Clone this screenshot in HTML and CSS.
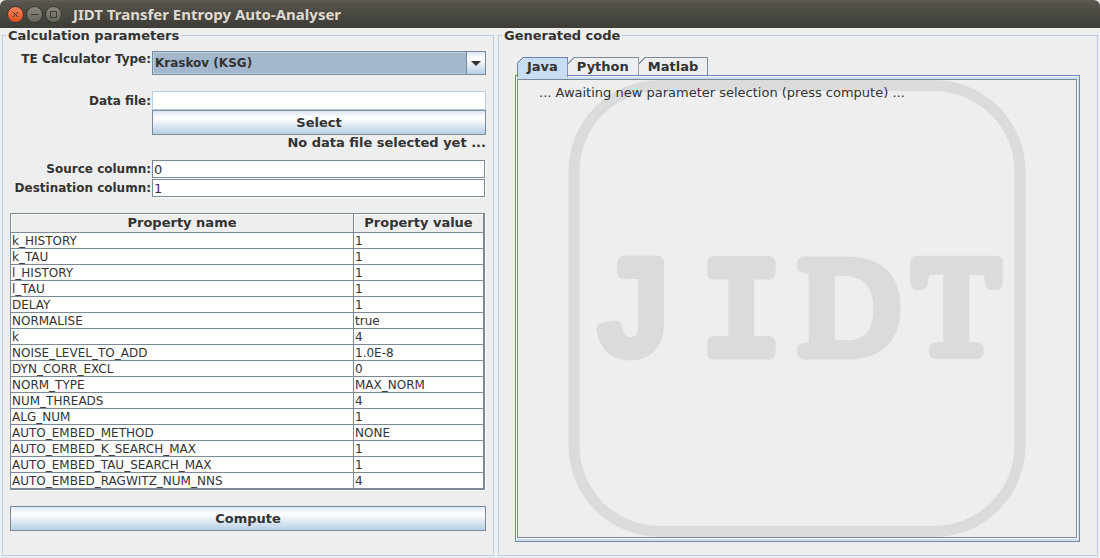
FILE: index.html
```html
<!DOCTYPE html>
<html lang="en">
<head>
<meta charset="utf-8">
<title>JIDT Transfer Entropy Auto-Analyser</title>
<link rel="stylesheet" href="styles.css">
</head>
<body>
<header class="titlebar">
  <button class="winbtn close" type="button" aria-label="Close"><svg viewBox="0 0 17 17"><path d="M6 6l5 5M11 6l-5 5"/></svg></button>
  <button class="winbtn" type="button" aria-label="Minimise"><svg viewBox="0 0 17 17"><path d="M5 8.500h7"/></svg></button>
  <button class="winbtn" type="button" aria-label="Maximise"><svg viewBox="0 0 17 17"><path d="M5.500 5.500h6v6h-6z"/></svg></button>
  <h1 class="title">JIDT Transfer Entropy Auto-Analyser</h1>
</header>
<main class="panes">
  <fieldset class="pane">
    <legend>Calculation parameters</legend>
    <div class="params">
      <div class="form">
        <label for="calc">TE Calculator Type:</label>
        <div class="combo">
          <select id="calc"><option>Kraskov (KSG)</option></select>
          <span class="arrow"><svg viewBox="0 0 10 5"><path d="M0 0h10l-5 5z"/></svg></span>
        </div>
        <label class="file-label" for="file">Data file:</label>
        <div class="file">
          <input class="readonly" id="file" type="text" readonly>
          <button class="push" type="button">Select</button>
          <p class="status">No data file selected yet ...</p>
        </div>
        <label class="field-label" for="source">Source column:</label>
        <div class="field"><input id="source" type="text" value="0"></div>
        <label class="field-label" for="dest">Destination column:</label>
        <div class="field"><input id="dest" type="text" value="1"></div>
      </div>
      <table class="props">
        <thead><tr><th scope="col">Property name</th><th class="value" scope="col">Property value</th></tr></thead>
        <tbody>
          <tr><td>k_HISTORY</td><td>1</td></tr>
          <tr><td>k_TAU</td><td>1</td></tr>
          <tr><td>l_HISTORY</td><td>1</td></tr>
          <tr><td>l_TAU</td><td>1</td></tr>
          <tr><td>DELAY</td><td>1</td></tr>
          <tr><td>NORMALISE</td><td>true</td></tr>
          <tr><td>k</td><td>4</td></tr>
          <tr><td>NOISE_LEVEL_TO_ADD</td><td>1.0E-8</td></tr>
          <tr><td>DYN_CORR_EXCL</td><td>0</td></tr>
          <tr><td>NORM_TYPE</td><td>MAX_NORM</td></tr>
          <tr><td>NUM_THREADS</td><td>4</td></tr>
          <tr><td>ALG_NUM</td><td>1</td></tr>
          <tr><td>AUTO_EMBED_METHOD</td><td>NONE</td></tr>
          <tr><td>AUTO_EMBED_K_SEARCH_MAX</td><td>1</td></tr>
          <tr><td>AUTO_EMBED_TAU_SEARCH_MAX</td><td>1</td></tr>
          <tr><td>AUTO_EMBED_RAGWITZ_NUM_NNS</td><td>4</td></tr>
        </tbody>
      </table>
      <button class="push" type="button">Compute</button>
    </div>
  </fieldset>
  <fieldset class="pane">
    <legend>Generated code</legend>
    <div class="code">
      <div class="tabs" role="tablist">
        <button class="tab active" type="button" role="tab" aria-selected="true">Java</button>
        <button class="tab" type="button" role="tab" aria-selected="false">Python</button>
        <button class="tab" type="button" role="tab" aria-selected="false">Matlab</button>
      </div>
      <div class="sheet" role="tabpanel">
        <div class="view">
          <svg class="watermark" viewBox="0 0 457 457" aria-hidden="true">
            <rect x="5.500" y="5.500" width="446" height="446" rx="86"/>
            <g class="mark">
              <text class="mono" x="64" y="273">J</text>
              <text class="mono" x="173" y="273">I</text>
              <text x="281" y="273">D</text>
              <text x="388" y="273">T</text>
            </g>
          </svg>
          <textarea aria-label="Java code" readonly>... Awaiting new parameter selection (press compute) ...</textarea>
        </div>
      </div>
    </div>
  </fieldset>
</main>
</body>
</html>
```
FILE: styles.css
```css
* { box-sizing: border-box; }

body {
  margin: 0;
  min-height: 100vh;
  display: flex;
  flex-direction: column;
  background: #eee;
  color: #333;
  font: 13px/16px "DejaVu Sans", sans-serif;
}

button, input, select, textarea {
  font: inherit;
  color: inherit;
  margin: 0;
  border-radius: 0;
  outline: none;
}

/* Title bar */
.titlebar {
  display: flex;
  align-items: center;
  gap: 2px;
  height: 28px;
  padding: 0 7px;
  border-radius: 6px 6px 0 0;
  background: linear-gradient(#5f5d53, #55534b 3px, #3d3c37);
}

.winbtn {
  width: 17px;
  height: 17px;
  padding: 0;
  border: 1px solid #35342f;
  border-radius: 50%;
  background: linear-gradient(#8a877d, #66645c);
}

.winbtn svg {
  display: block;
  width: 17px;
  height: 17px;
  margin: -1px;
  fill: none;
  stroke: #3a3934;
}

.winbtn.close { background: linear-gradient(#f4845a, #e2501f); }

.title {
  margin: 0 0 0 9px;
  color: #dfdbd2;
  font: bold 15px/20px "Noto Sans", sans-serif;
}

/* Titled panes */
.panes {
  flex: 1;
  display: grid;
  grid-template-columns: 492fr 600fr;
  gap: 4px;
  padding: 0 2px 2px;
}

.pane {
  display: flex;
  flex-direction: column;
  min-width: 0;
  margin: 0;
  padding: 0;
  border: 1px solid #b8cfe5;
}

.pane legend {
  margin-left: 3px;
  padding: 0 2px;
  line-height: 15px;
  font-weight: bold;
}

.params { padding: 8px 7px 24px; }

.code {
  flex: 1;
  display: flex;
  flex-direction: column;
  padding: 14px 17px 13px 16px;
}

.form {
  display: grid;
  grid-template-columns: minmax(141px, auto) 1fr;
  column-gap: 1px;
  font-weight: bold;
}

.form label {
  font-size: 12px;
  text-align: right;
}

.file-label { margin-top: 18px; }
.form .field-label { line-height: 19px; }

.form input {
  display: block;
  width: 100%;
  height: 18px;
  padding: 0 1px;
  border: 1px solid #7a8a99;
  box-shadow: 1px 1px #fff;
  background: #fff;
  font-weight: normal;
}

.field { padding: 0 1px 1px 0; }

.form .readonly {
  height: 19px;
  border-color: #b8cfe5;
  box-shadow: none;
}

.combo {
  position: relative;
  height: 24px;
}

.combo select {
  width: 100%;
  height: 24px;
  padding: 0 2px;
  appearance: none;
  border: 1px solid #7a8a99;
  box-shadow: inset 0 0 0 1px #b8cfe5;
  background: #a3b8cc;
  font-size: 12px;
  font-weight: bold;
}

.arrow {
  position: absolute;
  inset: 1px 1px 1px auto;
  width: 19px;
  display: grid;
  place-items: center;
  border-left: 1px solid #7a8a99;
  background: linear-gradient(#dde8f3, #fff 30%, #b8cfe5);
  pointer-events: none;
}

.arrow svg {
  width: 10px;
  height: 5px;
  fill: #333;
}

.file { margin: 16px 0 9px; }

.push {
  display: block;
  width: 100%;
  height: 25px;
  padding: 0;
  border: 1px solid #7a8a99;
  background: linear-gradient(#dde8f3, #fff 30%, #b8cfe5);
  font-weight: bold;
}

.status {
  margin: 0;
  text-align: right;
}

/* Property table */
.props {
  width: calc(100% - 1px);
  margin: 15px 0 16px;
  border-collapse: separate;
  border-spacing: 0;
  border: 1px solid #7a8a99;
  box-shadow: 1px 1px #fff;
  background: #fff;
  table-layout: fixed;
}

.props th, .props td {
  height: 16px;
  padding: 1px 1px 0;
  border: solid #7a8a99;
  border-width: 0 1px 1px 0;
  line-height: 14px;
  text-align: left;
}

.props td { font-size: 12px; }

.props th {
  height: 19px;
  padding-top: 0;
  box-shadow: inset 1px 1px #fff;
  background: #eee;
  text-align: center;
}

.props .value { width: 130px; }

/* Tabbed code view */
.tabs {
  display: flex;
  padding-left: 2px;
}

.tab {
  height: 18px;
  padding: 0 9px;
  border: solid #7a8a99;
  border-width: 1px 1px 0 0;
  background: linear-gradient(135deg, #7a8a99 5px, #eee 5px) border-box;
  clip-path: polygon(0 6px, 6px 0, 100% 0, 100% 100%, 0 100%);
  font-weight: bold;
}

.tab.active {
  position: relative;
  z-index: 1;
  height: 20px;
  margin-bottom: -2px;
  padding-bottom: 2px;
  border-color: #6382bf;
  border-left-width: 1px;
  background: linear-gradient(135deg, #6382bf 5px, #fff 5px 6px, #c8ddf2 6px) border-box;
}

.sheet {
  flex: 1;
  display: flex;
  padding: 3px 2px 3px 1px;
  border: 1px solid #7a8a99;
  border-top-color: #6382bf;
  border-left-color: #6382bf;
  box-shadow: inset 1px 1px #fff;
  background: #c8ddf2;
}

.view {
  flex: 1;
  position: relative;
  display: flex;
  border: 1px solid #7a8a99;
  box-shadow: 1px 1px #fff;
  background: #eee;
}

.watermark {
  position: absolute;
  inset: 0;
  width: 100%;
  height: 100%;
}

.watermark rect {
  fill: none;
  stroke: #dbdbdb;
  stroke-width: 11;
}

.mark {
  fill: #dbdbdb;
  stroke: #dbdbdb;
  stroke-width: 13;
  stroke-linejoin: round;
  font: 138px "Liberation Serif", serif;
  text-anchor: middle;
}

.mark .mono { font-family: "Liberation Mono", monospace; }

.view textarea {
  position: relative;
  flex: 1;
  padding: 5px 21px;
  border: 0;
  resize: none;
  background: transparent;
}
```
